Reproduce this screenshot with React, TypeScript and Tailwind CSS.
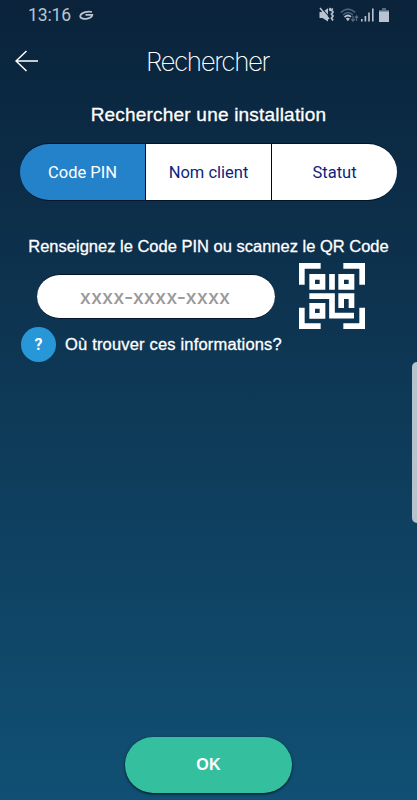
import { useState } from "react";

const tabs = ["Code PIN", "Nom client", "Statut"];

const StatusBar = () => (
  <div className="flex h-[30px] items-center justify-between px-7 text-[#b9c4d0]">
    <div className="flex items-center gap-2">
      <span className="pt-px font-['Roboto',sans-serif] text-[17.5px] leading-none tracking-[-0.1px]">13:16</span>
      <svg width="15" height="11" viewBox="0 0 15 11" fill="none" stroke="currentColor">
        <path d="M13 2C9 1 2.600 2.300 1.400 5.500.5 8.300 4.600 9.500 8.300 8.600c2.800-.7 4.800-2 5-3.800H6.500" strokeWidth="1.8" />
      </svg>
    </div>
    <div className="flex items-center">
      {/* Muted / vibrate */}
      <svg width="16" height="16" viewBox="0 0 16 16" fill="currentColor">
        <path d="M.5 5h3L9 1.200V14.500L3.500 11h-3z" />
        <path d="M2.200 .5l9.500 11" stroke="#0a243c" strokeWidth="1.100" />
        <path d="M1 1l9 11" stroke="currentColor" strokeWidth="1.500" />
        <path d="M11.500 1l-.8 1.500 1 1.500M13.800 1.500l-1.300 1.500 1.500 2-1.500 2 1.500 2-1.500 2 1.500 2.500" fill="none" stroke="currentColor" strokeWidth="1.800" />
      </svg>
      <svg className="ml-[5px]" width="19" height="15" viewBox="0 0 19 15" fill="none" stroke="currentColor" strokeWidth="1.7">
        <path d="M.8 4.500Q8-2.400 15.200 4.500M3.100 7Q8 2 12.900 7" opacity=".4" />
        <path d="M4.500 9.200Q8 6 11 8.800" />
        <path d="M5.800 10.600L7.900 13.200 9.900 10.600Q7.900 9 5.800 10.600z" fill="currentColor" stroke="none" />
        <path d="M13 8v5M11.300 11.200l1.700 2 1.700-2M16.500 13V8.200M14.800 9.800l1.700-2 1.700 2" opacity=".45" strokeWidth="1.1" />
      </svg>
      <svg className="ml-[2px]" width="13" height="14" viewBox="0 0 13 14" fill="currentColor">
        <path d="M0 11h1.600v2.500H0zM3.600 8h1.600v5.500H3.600zM7.200 4.500h1.600v9H7.200zM11 .5h1.600v13H11z" />
      </svg>
      <svg className="ml-[5px]" width="10" height="14" viewBox="0 0 10 14" fill="currentColor">
        <path d="M3 0h4v2h3v12H0V2h3z" />
        <path d="M3 0h4v2h3v1.600H0V2h3z" fill="#0a243c" opacity=".55" />
      </svg>
    </div>
  </div>
);

const QrIcon = () => (
  <svg width="66" height="66" viewBox="0 0 198 198" fill="none" stroke="#fff" strokeWidth="17">
    {/* Scanner corners */}
    <path d="M65 8.5H8.5V65M133 8.5h56.5V65M8.5 134v55.5H65M133 189.5h56.5V134" />
    {/* Code modules */}
    <path d="M39.5 41.5h31v30h-31zM126.5 41.5h31v30h-31zM39.5 128.5h31v30h-31z" />
    <path d="M99 33v47M31 99.5h68v58.5h66M126.5 135V99.5h31V135" />
  </svg>
);

export default function App() {
  const [active, setActive] = useState(0);

  return (
    <main className="relative flex h-[800px] w-full flex-col overflow-hidden bg-linear-to-b from-[#0a233b] to-[#105074] font-['Liberation_Sans',Arial,sans-serif] text-white">
      <StatusBar />

      <header className="grid h-[62px] grid-cols-[40px_1fr_40px] items-center">
        <button className="pl-[15px]" aria-label="Retour">
          <svg width="24" height="22" viewBox="0 0 24 22" fill="none" stroke="#fff" strokeWidth="1.5">
            <path d="M23 11H1M11.5 1L1 11l10.5 10" />
          </svg>
        </button>
        <h1 className="pr-0.5 text-center font-['Inter',sans-serif] text-[26px] font-extralight tracking-[-1.4px]">Rechercher</h1>
      </header>

      <h2 className="mt-[9px] text-center text-[19px] leading-7 tracking-[0.2px] [-webkit-text-stroke:0.3px_white]">
        Rechercher une installation
      </h2>

      <div className="mx-5 mt-[14px] flex h-[58px] divide-x divide-[#00004d] overflow-hidden rounded-full border-y border-[#04142b] font-['Roboto',sans-serif] text-[16.5px]">
        {tabs.map((tab, i) => (
          <button
            key={tab}
            onClick={() => setActive(i)}
            className={i === active ? "flex-1 bg-[#2482cb] pt-0.5 text-white" : "flex-1 bg-white pt-0.5 text-[#0c1e80]"}
          >
            {tab}
          </button>
        ))}
      </div>

      <p className="mt-[33px] whitespace-nowrap text-center text-[16.5px] leading-6 [-webkit-text-stroke:0.3px_white]">
        Renseignez le Code PIN ou scannez le QR Code
      </p>

      <div className="ml-[37px] mt-[5px] flex items-center gap-6">
        <input
          className="h-[45px] w-[238px] rounded-full border-y border-[#04142b] bg-white pt-0.5 pr-0.5 text-center font-['Inter',sans-serif] text-[20px] text-[#999] outline-none placeholder:font-medium placeholder:text-[#999]"
          placeholder="xxxx-xxxx-xxxx"
        />
        <QrIcon />
      </div>

      <div className="ml-[21px] mt-[-2px] flex items-center gap-[9px]">
        <span className="flex size-[35px] items-center justify-center rounded-full bg-[#2797d7] font-['Roboto',sans-serif] text-base font-bold">?</span>
        <span className="text-[16.5px] tracking-[0.18px] [-webkit-text-stroke:0.3px_white]">Où trouver ces informations?</span>
      </div>

      <button className="mx-auto mb-[7px] mt-auto h-14 w-[167px] rounded-full bg-[#34bf9f] font-bold tracking-[0.2px] shadow-sm shadow-black/60">
        OK
      </button>

      {/* Edge panel handle */}
      <div className="absolute right-0 top-[362px] h-[161px] w-[5px] rounded-l-[5px] bg-[#b6c3cf]" />
    </main>
  );
}
